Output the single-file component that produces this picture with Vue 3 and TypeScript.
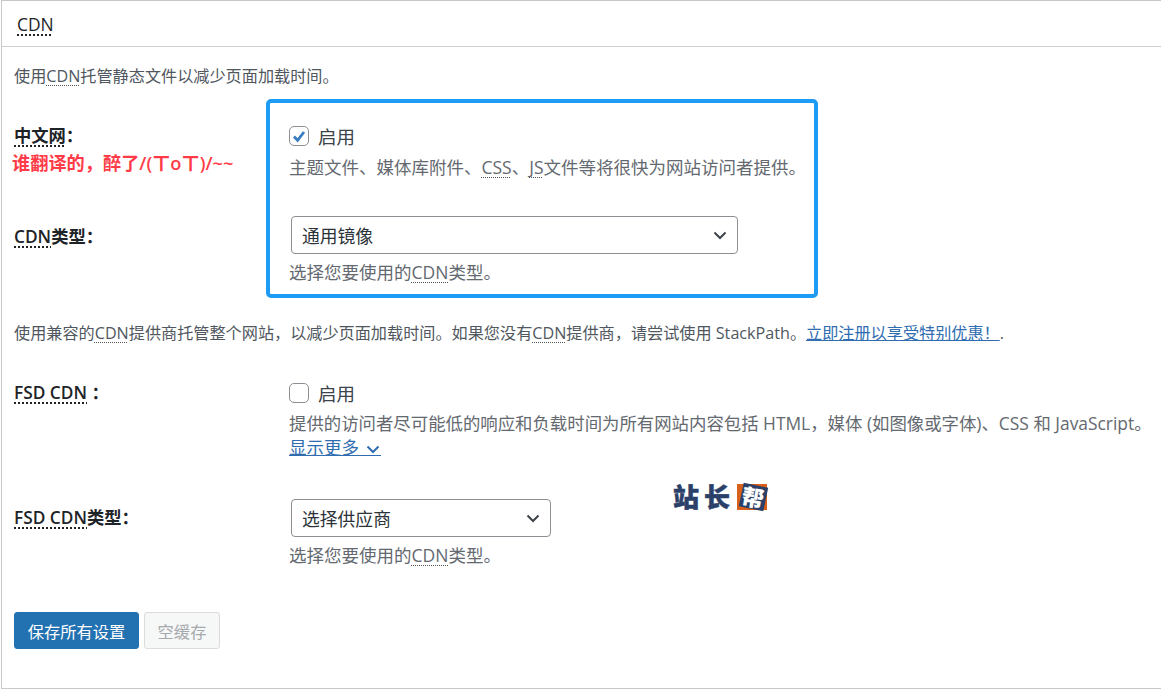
<script setup lang="ts">
const saveLabel = '保存所有设置'
const clearLabel = '空缓存'
</script>

<template>
  <div class="page">
    <section class="panel">
      <h2 class="head"><span class="dot strong">CDN</span></h2>
      <div class="body">
        <p class="intro">使用<span class="dot">CDN</span>托管静态文件以减少页面加载时间。</p>

        <div class="row first">
          <div class="label">
            <b><span class="dot strong">中文网</span>：</b>
            <span class="remark">谁翻译的，醉了/(ㄒoㄒ)/~~</span>
          </div>
          <div class="field">
            <label class="check">
              <span class="box on">
                <svg viewBox="0 0 20 20" width="20" height="20"><path d="M5 10.500l3.600 3.800L15 6" fill="none" stroke="#3a7cc0" stroke-width="2.800" /></svg>
              </span>
              启用
            </label>
            <p class="hint">主题文件、媒体库附件、<span class="dot">CSS</span>、<span class="dot">JS</span>文件等将很快为网站访问者提供。</p>
          </div>
        </div>

        <div class="row second">
          <div class="label offset-a"><b><span class="dot strong">CDN</span>类型：</b></div>
          <div class="field">
            <div class="select wide">通用镜像
              <svg viewBox="0 0 14 9" width="14" height="9"><path d="M1.500 1.500L7 7l5.500-5.500" fill="none" stroke="#3c434a" stroke-width="2" /></svg>
            </div>
            <p class="hint tight">选择您要使用的<span class="dot">CDN</span>类型。</p>
          </div>
        </div>

        <p class="intro second-intro">使用兼容的<span class="dot">CDN</span>提供商托管整个网站，以减少页面加载时间。如果您没有<span class="dot">CDN</span>提供商，请尝试使用 StackPath。<a class="link">立即注册以享受特别优惠！</a>.</p>

        <div class="row third">
          <div class="label"><b><span class="dot strong">FSD CDN</span> ：</b></div>
          <div class="field">
            <label class="check">
              <span class="box"></span>
              启用
            </label>
            <p class="hint nowrap">提供的访问者尽可能低的响应和负载时间为所有网站内容包括 HTML，媒体 (如图像或字体)、CSS 和 JavaScript。</p>
            <a class="more">显示更多<svg viewBox="0 0 14 9" width="14" height="9"><path d="M1.500 1.500L7 7l5.500-5.500" fill="none" stroke="#2f6db0" stroke-width="2" /></svg></a>
          </div>
        </div>

        <div class="row fourth">
          <div class="label offset-b"><b><span class="dot strong">FSD CDN</span>类型：</b></div>
          <div class="field">
            <div class="select narrow">选择供应商
              <svg viewBox="0 0 14 9" width="14" height="9"><path d="M1.500 1.500L7 7l5.500-5.500" fill="none" stroke="#3c434a" stroke-width="2" /></svg>
            </div>
            <p class="hint tight">选择您要使用的<span class="dot">CDN</span>类型。</p>
          </div>
        </div>

        <div class="actions">
          <button class="btn primary" type="button">{{ saveLabel }}</button>
          <button class="btn disabled" type="button">{{ clearLabel }}</button>
        </div>
      </div>
    </section>

    <div class="highlight"></div>

    <div class="logo">
      <span class="logo-text">站</span>
      <span class="logo-text">长</span>
      <span class="logo-mark">
        <svg viewBox="0 0 32 32" width="32" height="32">
          <rect x="0" y="3" width="30" height="26" fill="#d9601c" />
          <rect x="4" y="4" width="25" height="24" transform="rotate(12 16.500 16)" fill="#2b4069" />
        </svg>
        <span class="logo-glyph">帮</span>
      </span>
    </div>
  </div>
</template>

<style scoped>
.page {
  position: relative;
  width: 1161px;
  height: 691px;
  overflow: hidden;
  background: #fff;
  font-family: "Open Sans", "Noto Sans CJK SC", sans-serif;
  color: #50575e;
  font-size: 17.500px;
}
.panel {
  box-sizing: border-box;
  width: 1180px;
  height: 689px;
  border: 1px solid #c8c8c8;
  border-right: 0;
  margin-left: 1px;
}
.head {
  margin: 0;
  height: 46px;
  box-sizing: border-box;
  padding: 12px 0 0 15px;
  border-bottom: 1px solid #cfcfcf;
  font-size: 17.400px;
  line-height: 22px;
  font-weight: 400;
  color: #1d2327;
}
.body {
  padding: 0 0 0 12px;
}
.dot {
  text-decoration: underline dotted #555 1px;
  text-underline-offset: 3px;
  text-decoration-skip-ink: none;
}
.dot.strong { text-decoration: underline dotted #222 2px; text-decoration-skip-ink: none; }
.intro {
  margin: 0;
  padding-top: 19px;
  font-size: 16.150px;
  line-height: 20px;
  color: #50575e;
  white-space: nowrap;
}
.row {
  display: flex;
}
.first { margin-top: 38px; height: 90px; }
.second { height: 109px; padding-top: 2px; box-sizing: border-box; }
.second-intro { padding-top: 0; }
.third { margin-top: 38px; height: 118px; }
.fourth { height: 113px; }
.label {
  width: 275px;
  flex: none;
  color: #1d2327;
  line-height: 24px;
  font-size: 17.300px;
}
.offset-a { margin-top: 9px; }
.offset-b { margin-top: 7px; }
.label b { font-weight: 600; display: block; }
.remark {
  display: block;
  margin: 2px 0 0 -2px;
  color: #ff3b47;
  font-size: 18.200px;
  font-weight: 600;
  line-height: 26px;
  white-space: nowrap;
}
.field { min-width: 0; }
.check {
  display: flex;
  align-items: center;
  gap: 9px;
  height: 24px;
  color: #3c434a;
  font-size: 18.500px;
}
.box {
  box-sizing: border-box;
  width: 20px;
  height: 20px;
  border: 1px solid #8c8f94;
  border-radius: 5px;
  background: #fff;
  display: flex;
  align-items: center;
  justify-content: center;
}
.box svg { flex: none; margin: -1px; }
.hint {
  margin: 7px 0 0;
  line-height: 24px;
  color: #646970;
  white-space: nowrap;
}
.nowrap { margin-top: 6px; font-size: 17.400px; }
.hint.tight { margin-top: 6px; }
.select {
  box-sizing: border-box;
  height: 38px;
  margin-left: 2px;
  padding: 0 10px;
  display: flex;
  align-items: center;
  justify-content: space-between;
  border: 1px solid #8c8f94;
  border-radius: 4px;
  color: #2c3338;
  font-size: 17.800px;
}
.wide { width: 447px; }
.narrow { width: 260px; }
.link { color: #2f6db0; text-decoration: underline; }
.more {
  display: inline-block;
  box-sizing: border-box;
  height: 21px;
  line-height: 24px;
  color: #2f6db0;
  border-bottom: 1px solid #2f6db0;
}
.more svg { margin: 0 1px 0 7px; }
.actions { display: flex; gap: 5px; }
.btn {
  height: 37px;
  box-sizing: border-box;
  border-radius: 3px;
  font: inherit;
  font-size: 16.300px;
  padding: 0;
}
.primary { background: #2271b1; border: 1px solid #2271b1; color: #fff; width: 125px; }
.disabled { background: #f6f7f7; border: 1px solid #dcdcde; color: #a7aaad; width: 76px; }
.highlight {
  position: absolute;
  left: 266px;
  top: 99px;
  width: 552px;
  height: 199px;
  box-sizing: border-box;
  border: 4px solid #1e9cf5;
  border-radius: 5px;
}
.logo {
  position: absolute;
  left: 673px;
  top: 481px;
  display: flex;
  align-items: center;
  gap: 5px;
}
.logo-text {
  color: #2b4069;
  font-size: 26px;
  font-weight: 900;
  -webkit-text-stroke: 0.5px #2b4069;
  line-height: 32px;
}
.logo-mark {
  position: relative;
  width: 32px;
  height: 32px;
  display: block;
  margin-left: 2px;
}
.logo-mark svg { display: block; overflow: visible; }
.logo-glyph {
  position: absolute;
  left: 5px;
  top: 3px;
  color: #fff;
  font-size: 22px;
  font-weight: 900;
  line-height: 26px;
  transform: rotate(10deg);
}
</style>
